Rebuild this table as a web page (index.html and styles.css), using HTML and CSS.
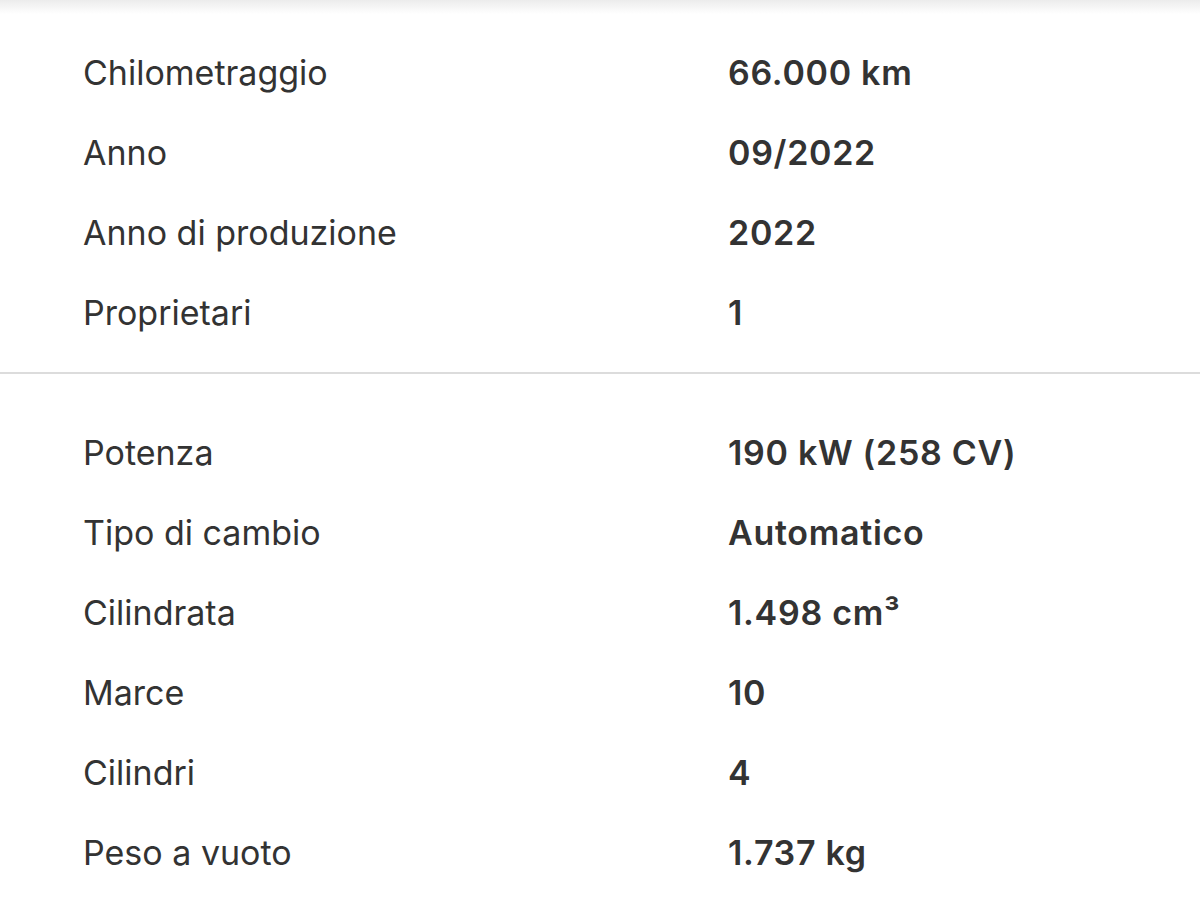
FILE: index.html
```html
<!DOCTYPE html>
<html lang="it">
<head>
<meta charset="utf-8">
<link rel="stylesheet" href="styles.css">
</head>
<body>
<div class="topshade"></div>
<section class="group first">
  <div class="row"><span class="label">Chilometraggio</span><span class="value">66.000 km</span></div>
  <div class="row"><span class="label">Anno</span><span class="value">09/2022</span></div>
  <div class="row"><span class="label">Anno di produzione</span><span class="value">2022</span></div>
  <div class="row"><span class="label">Proprietari</span><span class="value">1</span></div>
</section>
<hr class="divider">
<section class="group second">
  <div class="row"><span class="label">Potenza</span><span class="value">190 kW (258 CV)</span></div>
  <div class="row"><span class="label">Tipo di cambio</span><span class="value">Automatico</span></div>
  <div class="row"><span class="label">Cilindrata</span><span class="value">1.498 cm³</span></div>
  <div class="row"><span class="label">Marce</span><span class="value">10</span></div>
  <div class="row"><span class="label">Cilindri</span><span class="value">4</span></div>
  <div class="row"><span class="label">Peso a vuoto</span><span class="value">1.737 kg</span></div>
</section>
</body>
</html>
```
FILE: styles.css
```css
html, body {
  margin: 0;
  padding: 0;
  background: #ffffff;
}
body {
  width: 1200px;
  height: 900px;
  overflow: hidden;
  position: relative;
  font-family: Inter, "Liberation Sans", sans-serif;
  color: #333333;
}
.topshade {
  position: absolute;
  top: 0;
  left: 0;
  right: 0;
  height: 14px;
  background: linear-gradient(to bottom, #ececec, rgba(255,255,255,0));
}
.group {
  display: flex;
  flex-direction: column;
  padding: 0 0 0 83px;
}
.group.first {
  padding-top: 32px;
  padding-bottom: 20px;
}
.group.second {
  padding-top: 38px;
}
.row {
  display: grid;
  grid-template-columns: 645px 1fr;
  height: 80px;
  align-items: center;
  font-size: 34px;
}
.label {
  font-weight: 400;
  letter-spacing: 0;
}
.value {
  font-weight: 600;
  letter-spacing: 0.7px;
}
.divider {
  margin: 0;
  border: 0;
  height: 2px;
  background: #dcdcdc;
}
```
